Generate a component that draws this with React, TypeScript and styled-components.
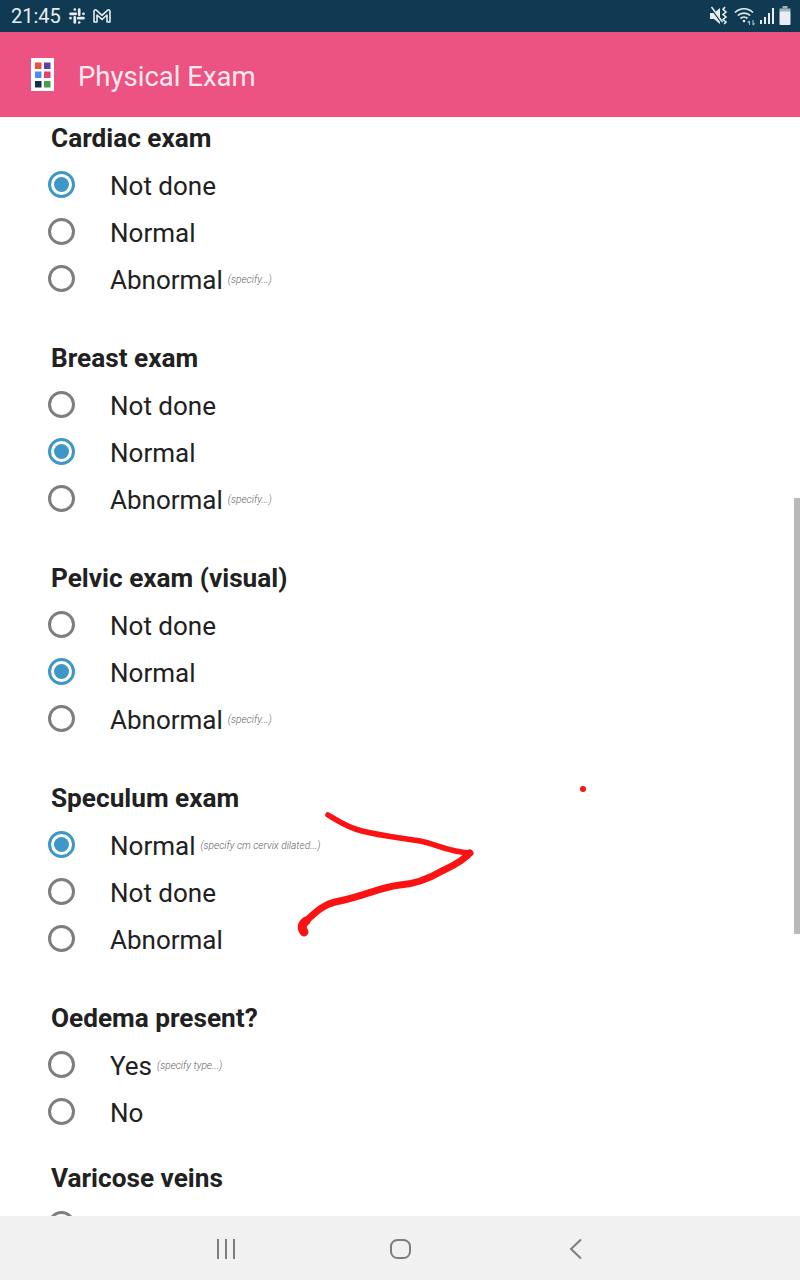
import React from "react"
import styled, { createGlobalStyle } from "styled-components"

const GlobalStyle = createGlobalStyle`
  html, body {
    margin: 0;
    padding: 0;
    background: #fff;
  }
  * {
    box-sizing: border-box;
  }
`

const Screen = styled.div`
  position: relative;
  display: flex;
  flex-direction: column;
  width: 800px;
  height: 1280px;
  overflow: hidden;
  background: #fff;
  font-family: Roboto, "Liberation Sans", sans-serif;
  color: #212121;
`

const StatusBar = styled.div`
  display: flex;
  align-items: center;
  justify-content: space-between;
  flex: 0 0 32px;
  padding: 0 9px 0 11px;
  background: #103a52;
  color: #e8eef1;
`

const StatusGroup = styled.div`
  display: flex;
  align-items: center;
  gap: ${props => props.$gap}px;
`

const Clock = styled.span`
  font-size: 20px;
  line-height: 32px;
  margin-right: 1px;
`

const AppBar = styled.header`
  display: flex;
  align-items: center;
  gap: 24px;
  flex: 0 0 85px;
  padding: 3px 0 0 31px;
  background: #ec5282;
  color: #fde9ef;
  font-size: 27.5px;

  svg {
    margin-top: -3px;
  }
`

const Content = styled.main`
  flex: 1;
  min-height: 0;
  overflow: hidden;
  padding-left: 48px;
`

const Section = styled.section`
  margin-bottom: ${props => props.$gap}px;
`

const Title = styled.h2`
  margin: 0 0 3px 3px;
  font-size: 26.200px;
  font-weight: 700;
  line-height: 42px;
  color: #212121;
`

const Option = styled.div`
  display: flex;
  align-items: center;
  height: 47px;
`

const Radio = styled.span`
  display: flex;
  align-items: center;
  justify-content: center;
  flex: 0 0 27px;
  height: 27px;
  margin-right: 35px;
  margin-top: -2px;
  border-radius: 50%;
  border: 3px solid ${props => (props.$checked ? "#3f97c8" : "#7e7e7e")};

  &::after {
    content: "";
    display: ${props => (props.$checked ? "block" : "none")};
    width: 15px;
    height: 15px;
    border-radius: 50%;
    background: #3f97c8;
  }
`

const Label = styled.span`
  font-size: 26px;
  line-height: 47px;
  color: #212121;
  position: relative;
  top: 1px;
`

const Hint = styled.span`
  margin-left: 5px;
  font-size: 10.200px;
  font-style: italic;
  font-weight: 300;
  color: #616161;
`

const ScrollThumb = styled.div`
  position: absolute;
  top: 498px;
  right: 0;
  width: 6px;
  height: 436px;
  background: #b9b9b9;
`

const Scribble = styled.svg`
  position: absolute;
  top: 0;
  left: 0;
  pointer-events: none;
`

const NavBar = styled.nav`
  display: flex;
  align-items: center;
  justify-content: center;
  flex: 0 0 64px;
  padding: 2px 0 0 1px;
  background: #f1f1f1;
  color: #7d7d7d;
`

const NavItem = styled.span`
  display: flex;
  justify-content: center;
  width: 175px;
`

const SlackIcon = () => (
  <svg width="18" height="18" viewBox="0 0 18 18" fill="none" stroke="currentColor" strokeWidth="2.700" strokeLinecap="round">
    <path d="M2.500 6.800h5.200M11.200 2.500v5.200M10.300 11.200h5.200M6.800 10.300v5.200" />
    <path d="M6.800 2.500h.01M15.500 6.800h.01M11.200 15.500h.01M2.500 11.200h.01" />
  </svg>
)

const GmailIcon = () => (
  <svg width="20" height="16" viewBox="0 0 20 16" fill="none" stroke="currentColor" strokeWidth="1.600" strokeLinejoin="round">
    <path d="M2 14V3.200C2 1.800 3.400 1.400 4.300 2.200L10 7.400l5.700-5.200C16.600 1.400 18 1.800 18 3.200V14h-3V7L10 11.500 5 7v7z" />
  </svg>
)

const MuteIcon = () => (
  <svg width="20" height="20" viewBox="0 0 20 20">
    <path d="M0 7h4l6-5v16l-6-5H0z" fill="currentColor" />
    <path d="M1 2l11 15" stroke="#103a52" strokeWidth="2" />
    <path d="M1.500 1l11 15" stroke="currentColor" strokeWidth="1.500" />
    <path d="M15 1l-2 2.500 3 2.500-3 2.500 3 2.500-3 2.500 3 2.500-2 2" fill="none" stroke="currentColor" strokeWidth="1.600" />
  </svg>
)

const WifiIcon = () => (
  <svg width="22" height="20" viewBox="0 0 22 20" fill="none" stroke="currentColor" strokeWidth="1.700">
    <path d="M1 6.500c5-5 13-5 18 0M3.800 9.500c3.500-3.300 9-3.300 12.400 0M6.500 12.500c2-1.800 5-1.800 7 0" />
    <circle cx="10" cy="15" r="1.300" fill="currentColor" stroke="none" />
    <path d="M15.500 19v-4M13.800 16.500l1.700-1.700M19 14v5M19 19l1.700-1.700" stroke="#9fb2bd" strokeWidth="1.200" />
  </svg>
)

const SignalIcon = () => (
  <svg width="15" height="18" viewBox="0 0 15 18" fill="currentColor">
    <rect x="0" y="13" width="2" height="4" />
    <rect x="4" y="10" width="2" height="7" />
    <rect x="8" y="6" width="2" height="11" />
    <rect x="12" y="1" width="2" height="16" />
  </svg>
)

const BatteryIcon = () => (
  <svg width="12" height="20" viewBox="0 0 12 20" fill="currentColor">
    <rect x="3.500" y="0" width="5" height="2.500" fill="#9fb2bd" />
    <rect x="0.500" y="2.500" width="11" height="3.500" fill="#9fb2bd" />
    <rect x="0.500" y="5.500" width="11" height="13.500" rx="1" />
  </svg>
)

const AppLogo = () => (
  <svg width="23" height="33" viewBox="0 0 23 33">
    <rect width="23" height="33" fill="#fff" />
    <rect x="4" y="4.500" width="6.500" height="6.500" fill="#e8543c" />
    <rect x="13" y="4.500" width="6.500" height="6.500" fill="#5e3ea8" />
    <rect x="4" y="13.500" width="6.500" height="6.500" fill="#4a8cf0" />
    <rect x="13" y="13.500" width="6.500" height="6.500" fill="#e83e6c" />
    <rect x="4" y="23" width="6.500" height="6.500" fill="#12304c" />
    <rect x="13" y="23" width="6.500" height="6.500" fill="#43a047" />
  </svg>
)

const sections = [
  { title: "Cardiac exam", gap: 34, selected: 0, options: [["Not done"], ["Normal"], ["Abnormal", "(specify...)"]] },
  { title: "Breast exam", gap: 34, selected: 1, options: [["Not done"], ["Normal"], ["Abnormal", "(specify...)"]] },
  { title: "Pelvic exam (visual)", gap: 34, selected: 1, options: [["Not done"], ["Normal"], ["Abnormal", "(specify...)"]] },
  { title: "Speculum exam", gap: 34, selected: 0, options: [["Normal", "(specify cm cervix dilated...)"], ["Not done"], ["Abnormal"]] },
  { title: "Oedema present?", gap: 21, selected: -1, options: [["Yes", "(specify type...)"], ["No"]] },
  { title: "Varicose veins", gap: 0, selected: -1, options: [["Yes"]] },
]

const App = () => {
  return (
    <Screen>
      <GlobalStyle />
      <StatusBar>
        <StatusGroup $gap={6}>
          <Clock>21:45</Clock>
          <SlackIcon />
          <GmailIcon />
        </StatusGroup>
        <StatusGroup $gap={4}>
          <MuteIcon />
          <WifiIcon />
          <SignalIcon />
          <BatteryIcon />
        </StatusGroup>
      </StatusBar>
      <AppBar>
        <AppLogo />
        <span>Physical Exam</span>
      </AppBar>
      <Content>
        {sections.map(section => (
          <Section key={section.title} $gap={section.gap}>
            <Title>{section.title}</Title>
            {section.options.map(([label, hint], index) => (
              <Option key={label}>
                <Radio $checked={section.selected === index} />
                <Label>{label}</Label>
                {hint && <Hint>{hint}</Hint>}
              </Option>
            ))}
          </Section>
        ))}
      </Content>
      <NavBar>
        <NavItem>
          <svg width="20" height="20" viewBox="0 0 20 20" stroke="currentColor" strokeWidth="2" fill="none">
            <path d="M2 0v20M10 0v20M18 0v20" />
          </svg>
        </NavItem>
        <NavItem>
          <svg width="21" height="20" viewBox="0 0 21 20" stroke="currentColor" strokeWidth="2" fill="none">
            <rect x="1" y="1" width="19" height="18" rx="6.500" />
          </svg>
        </NavItem>
        <NavItem>
          <svg width="13" height="20" viewBox="0 0 13 20" stroke="currentColor" strokeWidth="2" fill="none">
            <path d="M12 0.500L2 10 12 19.500" />
          </svg>
        </NavItem>
      </NavBar>
      <ScrollThumb />
      <Scribble width="800" height="1280" viewBox="0 0 800 1280" fill="none" stroke="#fb1212" strokeLinecap="round" strokeLinejoin="round">
        <path d="M328 815C338 821 348 828 362 831C382 836 402 838 420 841C436 844 448 852 470 853" strokeWidth="5.500" />
        <path d="M470 853C462 862 452 866 442 871C430 878 416 884 400 885C380 887 362 897 335 902C322 905 314 914 306 921" strokeWidth="7" />
        <path d="M306 921C302 924 301 927 304 932" strokeWidth="9" />
        <circle cx="583" cy="789" r="3" fill="#fb1212" stroke="none" />
      </Scribble>
    </Screen>
  )
}

export default App
